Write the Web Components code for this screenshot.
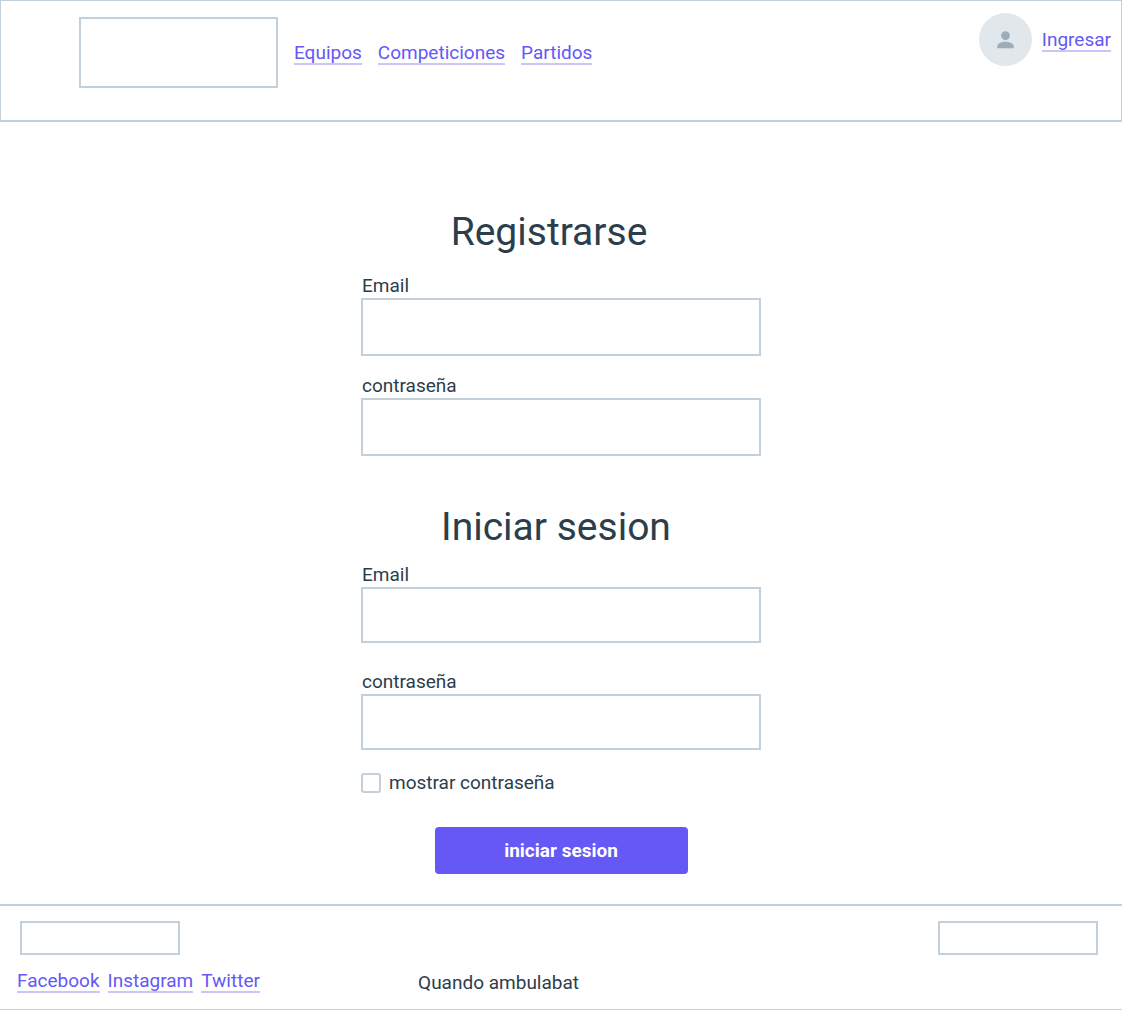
<!DOCTYPE html>
<html lang="es">
<head>
<meta charset="utf-8">
<meta name="viewport" content="width=device-width, initial-scale=1">
<title>Registrarse</title>
<style>
  :root {
    --line: #c3d0da;
    --ink: #2c3d4b;
    --accent: #6558f5;
    --accent-soft: #cac5fc;
  }
  body {
    margin: 0;
    background: #fff;
    color: var(--ink);
    font: 400 19px/24px Roboto, "Liberation Sans", sans-serif;
  }
</style>
</head>
<body>
<login-page></login-page>

<script>
const define = (name, html, setup) => {
  const template = document.createElement('template');
  template.innerHTML = html;
  customElements.define(name, class extends HTMLElement {
    constructor() {
      super();
      this.attachShadow({ mode: 'open' }).append(template.content.cloneNode(true));
    }
    connectedCallback() {
      if (setup) setup(this, this.shadowRoot);
    }
  });
};

define('text-link', `
  <style>
    :host { display: block; }
    a {
      display: block;
      padding-top: 2px;
      color: var(--accent);
      line-height: 20px;
      white-space: nowrap;
      text-decoration: none;
      border-bottom: 2px solid var(--accent-soft);
    }
  </style>
  <a href="#"><slot></slot></a>`);

define('place-holder', `
  <style>
    :host {
      display: block;
      box-sizing: border-box;
      width: 160px;
      height: 34px;
      margin: 0 3px;
      border: 2px solid var(--line);
    }
    :host([large]) { width: 199px; height: 71px; }
  </style>`);

define('user-avatar', `
  <style>
    :host {
      display: block;
      width: 53px;
      height: 53px;
      border-radius: 50%;
      background: #e2e7eb;
    }
    svg { display: block; width: 100%; height: 100%; fill: #9dadb9; }
  </style>
  <svg viewBox="0 0 53 53" aria-hidden="true">
    <circle cx="26.5" cy="22.6" r="4.4"/>
    <path d="M18.2 35.2v-1.5c0-3.4 4.3-4.9 8.3-4.9s8.3 1.5 8.3 4.9v1.5z"/>
  </svg>`);

define('site-header', `
  <style>
    :host {
      display: flex;
      justify-content: space-between;
      align-items: flex-start;
      box-sizing: border-box;
      min-height: 122px;
      padding: 12px 10px 0 75px;
      border: 1px solid var(--line);
      border-bottom-width: 2px;
    }
    .brand, nav, .user { display: flex; align-items: center; }
    .brand { gap: 13px; padding-top: 4px; }
    nav { gap: 16px; }
    .user { gap: 10px; }
  </style>
  <div class="brand">
    <place-holder large></place-holder>
    <nav>
      <text-link>Equipos</text-link>
      <text-link>Competiciones</text-link>
      <text-link>Partidos</text-link>
    </nav>
  </div>
  <div class="user">
    <user-avatar></user-avatar>
    <text-link>Ingresar</text-link>
  </div>`);

define('form-field', `
  <style>
    :host { display: block; }
    label { display: block; padding-left: 1px; }
    input {
      display: block;
      box-sizing: border-box;
      width: 100%;
      height: var(--field-height, 58px);
      padding: 0 12px;
      border: 2px solid var(--line);
      border-radius: 0;
      background: #fff;
      color: inherit;
      font: inherit;
    }
  </style>
  <label for="input"><slot></slot></label>
  <input id="input">`,
  (host, root) => { root.querySelector('input').type = host.getAttribute('type') || 'text'; });

define('check-option', `
  <style>
    :host { display: block; }
    label { display: flex; align-items: center; gap: 8px; }
    input {
      appearance: none;
      box-sizing: border-box;
      width: 20px;
      height: 20px;
      margin: 0;
      border: 2px solid var(--line);
      border-radius: 3px;
      background: #fff;
    }
    input:checked { background: var(--accent); }
  </style>
  <label><input type="checkbox"><slot></slot></label>`);

define('primary-button', `
  <style>
    :host { display: block; }
    button {
      display: block;
      width: 253px;
      height: 47px;
      padding: 0;
      border: 0;
      border-radius: 4px;
      background: var(--accent);
      color: #fff;
      font: inherit;
      font-weight: 700;
    }
  </style>
  <button type="button"><slot></slot></button>`);

define('form-section', `
  <style>
    :host { display: block; }
    h1 {
      margin: 0 0 var(--title-gap, 18px);
      padding-right: var(--title-inset, 24px);
      font-weight: 400;
      font-size: 39px;
      line-height: 48px;
      text-align: center;
    }
    form { display: flex; flex-direction: column; gap: var(--field-gap, 18px); }
  </style>
  <h1><slot name="title"></slot></h1>
  <form><slot></slot></form>`);

define('site-footer', `
  <style>
    :host {
      display: grid;
      grid-template-columns: 37% 1fr auto;
      padding: 15px 21px 14px 17px;
      border-top: 2px solid var(--line);
      border-bottom: 1px solid var(--line);
    }
    .social { display: grid; gap: 14px; padding-bottom: 2px; }
    nav { display: flex; gap: 8px; }
    p { margin: 0; align-self: end; }
  </style>
  <div class="social">
    <place-holder></place-holder>
    <nav>
      <text-link>Facebook</text-link>
      <text-link>Instagram</text-link>
      <text-link>Twitter</text-link>
    </nav>
  </div>
  <p>Quando ambulabat</p>
  <place-holder></place-holder>`);

define('login-page', `
  <style>
    :host { display: flex; flex-direction: column; min-height: 100vh; }
    main {
      flex: 1;
      box-sizing: border-box;
      width: 100%;
      max-width: 400px;
      margin: 0 auto;
      padding: 86px 0 30px;
    }
    .login {
      --title-gap: 12px;
      --title-inset: 10px;
      --field-gap: 27px;
      --field-height: 56px;
      margin-top: 47px;
    }
    .actions {
      display: flex;
      flex-direction: column;
      gap: 32px;
      padding-top: 21px;
    }
    primary-button { align-self: center; }
  </style>
  <site-header></site-header>
  <main>
    <form-section>
      <span slot="title">Registrarse</span>
      <form-field type="email">Email</form-field>
      <form-field type="password">contraseña</form-field>
    </form-section>
    <form-section class="login">
      <span slot="title">Iniciar sesion</span>
      <form-field type="email">Email</form-field>
      <form-field type="password">contraseña</form-field>
    </form-section>
    <div class="actions">
      <check-option>mostrar contraseña</check-option>
      <primary-button>iniciar sesion</primary-button>
    </div>
  </main>
  <site-footer></site-footer>`);
</script>
</body>
</html>
